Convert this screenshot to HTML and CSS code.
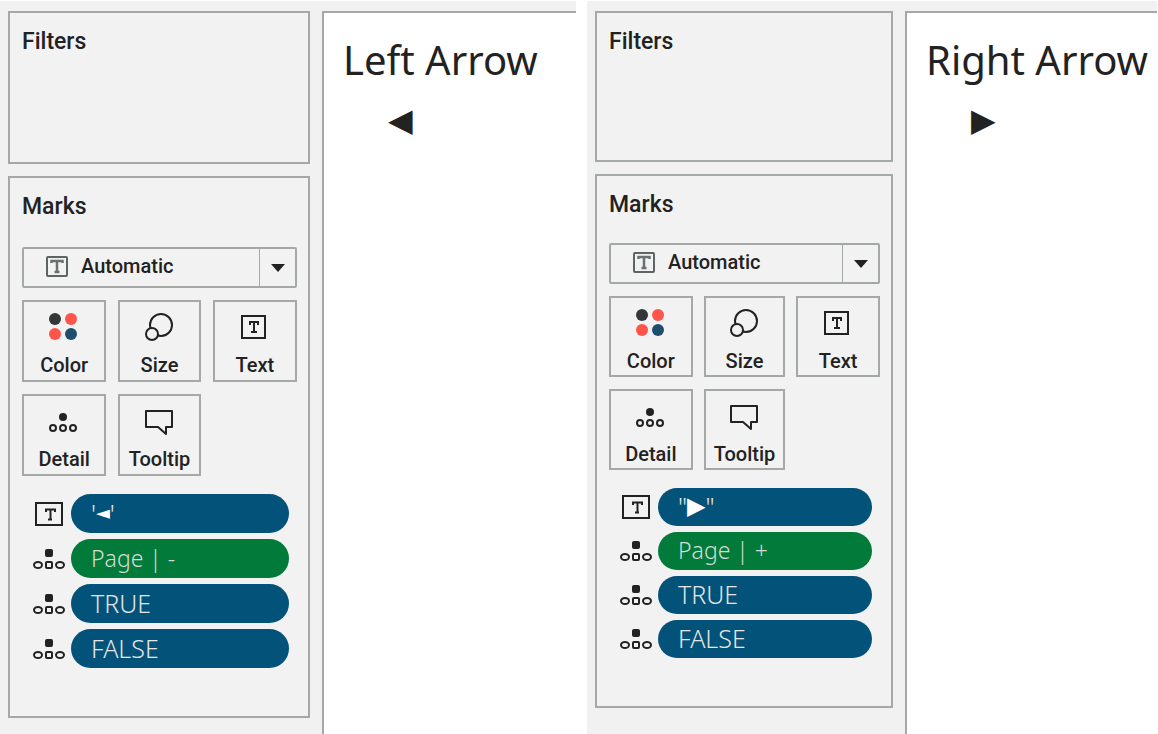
FILE: index.html
```html
<!DOCTYPE html>
<html lang="en">
<head>
<meta charset="utf-8">
<title>Left and right arrow sheets</title>
<link rel="stylesheet" href="styles.css">
</head>
<body>
<svg class="symbols" aria-hidden="true">
  <symbol id="i-color" viewBox="0 0 28 30">
    <circle cx="5" cy="7" r="6" fill="#343737"/><circle cx="21" cy="7" r="6" fill="#ff5449"/>
    <circle cx="5" cy="22" r="6" fill="#ff5449"/><circle cx="21" cy="22" r="6" fill="#1f4e6d"/>
  </symbol>
  <symbol id="i-size" viewBox="0 0 28 30">
    <circle cx="16" cy="13" r="11" fill="none" stroke="#222" stroke-width="2"/>
    <circle cx="7" cy="22" r="6" fill="#f2f2f2" stroke="#222" stroke-width="2"/>
  </symbol>
  <symbol id="i-text" viewBox="0 0 28 30">
    <rect x="1" y="4" width="23" height="22" fill="none" stroke="#222" stroke-width="2"/>
    <path d="M9 13V10h8v3M13 10v10M10 20h6" fill="none" stroke="#222" stroke-width="2"/>
  </symbol>
  <symbol id="i-detail" viewBox="0 0 28 30">
    <circle cx="13" cy="11" r="4" fill="#222"/>
    <g fill="none" stroke="#222" stroke-width="2"><circle cx="3" cy="22" r="3"/><circle cx="13" cy="22" r="3"/><circle cx="23" cy="22" r="3"/></g>
  </symbol>
  <symbol id="i-tooltip" viewBox="0 0 28 30">
    <path d="M1 5h26v16h-6v7l-8-7H1z" fill="none" stroke="#222" stroke-width="2" stroke-linejoin="round"/>
  </symbol>
  <symbol id="i-auto" viewBox="0 0 24 22">
    <rect x="2" y="1" width="20" height="19" rx="1" fill="#f2f2f2" stroke="#5e6363" stroke-width="2"/>
    <path d="M6.500 7V5h11v2M12 5v11M9.500 16h5" fill="none" stroke="#6b7070" stroke-width="2.500"/>
  </symbol>
  <symbol id="i-row-text" viewBox="0 0 32 24">
    <rect x="3" y="1" width="26" height="22" fill="none" stroke="#222" stroke-width="2"/>
    <path d="M13 10V7.500h9V10M17.500 7v10M15 17.500h4" fill="none" stroke="#222" stroke-width="2"/>
  </symbol>
  <symbol id="i-row-detail" viewBox="0 0 32 24">
    <rect x="12" y="2" width="8" height="8" rx="2" fill="#222"/>
    <g fill="none" stroke="#222" stroke-width="2"><ellipse cx="5" cy="18" rx="4" ry="3"/><rect x="13" y="15" width="6" height="6" rx="1"/><ellipse cx="27" cy="18" rx="4" ry="3"/></g>
  </symbol>
</svg>
<main class="sheets">
  <section class="sheet sheet-left">
    <div class="shelves">
      <section class="card filters"><h2 class="card-title">Filters</h2></section>
      <section class="card marks">
        <h2 class="card-title">Marks</h2>
        <div class="mark-type">
          <select class="mark-select" aria-label="Mark type"><option>Automatic</option></select>
          <svg class="mark-icon" aria-hidden="true"><use href="#i-auto"/></svg>
          <span class="mark-drop"><svg class="caret" viewBox="0 0 14 8" aria-hidden="true"><path d="M0 0h14L7 8z" fill="#222"/></svg></span>
        </div>
        <div class="tiles">
          <button class="tile"><svg class="tile-icon" aria-hidden="true"><use href="#i-color"/></svg>Color</button>
          <button class="tile"><svg class="tile-icon" aria-hidden="true"><use href="#i-size"/></svg>Size</button>
          <button class="tile"><svg class="tile-icon" aria-hidden="true"><use href="#i-text"/></svg>Text</button>
          <button class="tile"><svg class="tile-icon" aria-hidden="true"><use href="#i-detail"/></svg>Detail</button>
          <button class="tile"><svg class="tile-icon" aria-hidden="true"><use href="#i-tooltip"/></svg>Tooltip</button>
        </div>
        <ul class="pills">
          <li class="row"><svg class="row-icon" aria-hidden="true"><use href="#i-row-text"/></svg><button class="pill">'<span class="glyph">◄</span>'</button></li>
          <li class="row"><svg class="row-icon" aria-hidden="true"><use href="#i-row-detail"/></svg><button class="pill pill-green">Page | -</button></li>
          <li class="row"><svg class="row-icon" aria-hidden="true"><use href="#i-row-detail"/></svg><button class="pill">TRUE</button></li>
          <li class="row"><svg class="row-icon" aria-hidden="true"><use href="#i-row-detail"/></svg><button class="pill">FALSE</button></li>
        </ul>
      </section>
    </div>
    <div class="canvas">
      <h1 class="canvas-title">Left Arrow</h1>
      <div class="mark">◀</div>
    </div>
  </section>
  <section class="sheet sheet-right">
    <div class="shelves">
      <section class="card filters"><h2 class="card-title">Filters</h2></section>
      <section class="card marks">
        <h2 class="card-title">Marks</h2>
        <div class="mark-type">
          <select class="mark-select" aria-label="Mark type"><option>Automatic</option></select>
          <svg class="mark-icon" aria-hidden="true"><use href="#i-auto"/></svg>
          <span class="mark-drop"><svg class="caret" viewBox="0 0 14 8" aria-hidden="true"><path d="M0 0h14L7 8z" fill="#222"/></svg></span>
        </div>
        <div class="tiles">
          <button class="tile"><svg class="tile-icon" aria-hidden="true"><use href="#i-color"/></svg>Color</button>
          <button class="tile"><svg class="tile-icon" aria-hidden="true"><use href="#i-size"/></svg>Size</button>
          <button class="tile"><svg class="tile-icon" aria-hidden="true"><use href="#i-text"/></svg>Text</button>
          <button class="tile"><svg class="tile-icon" aria-hidden="true"><use href="#i-detail"/></svg>Detail</button>
          <button class="tile"><svg class="tile-icon" aria-hidden="true"><use href="#i-tooltip"/></svg>Tooltip</button>
        </div>
        <ul class="pills">
          <li class="row"><svg class="row-icon" aria-hidden="true"><use href="#i-row-text"/></svg><button class="pill">"<span class="glyph glyph-large">▶</span>"</button></li>
          <li class="row"><svg class="row-icon" aria-hidden="true"><use href="#i-row-detail"/></svg><button class="pill pill-green">Page | +</button></li>
          <li class="row"><svg class="row-icon" aria-hidden="true"><use href="#i-row-detail"/></svg><button class="pill">TRUE</button></li>
          <li class="row"><svg class="row-icon" aria-hidden="true"><use href="#i-row-detail"/></svg><button class="pill">FALSE</button></li>
        </ul>
      </section>
    </div>
    <div class="canvas">
      <h1 class="canvas-title">Right Arrow</h1>
      <div class="mark">▶</div>
    </div>
  </section>
</main>
</body>
</html>
```
FILE: styles.css
```css
* { box-sizing: border-box; }
body { margin: 0; background: #fff; color: #222; font-family: Roboto, sans-serif; }
.symbols { position: absolute; width: 0; height: 0; }
.sheets { display: grid; grid-template-columns: 576fr 570fr; column-gap: 11px; min-height: 100vh; padding: 1px 1px 0 0; }
.sheet { display: grid; column-gap: 12px; padding: 10px 0 0 8px; background: #f1f1f1; }
.sheet-left { grid-template-columns: 302px 1fr; --filters: 153px; --title-gap: 24px; --tile: 82px; --pill: 39px; --col-gap: 12px; }
.sheet-right { grid-template-columns: 298px 1fr; --filters: 151px; --title-gap: 22px; --tile: 81px; --pill: 38px; --col-gap: 11px; }
.shelves { display: flex; flex-direction: column; gap: 12px; padding-bottom: 16px; }
.card { border: 2px solid #a4a9a8; background: #f2f2f2; padding: 13px 11px 12px 12px; }
.filters { min-height: var(--filters); }
.marks { padding-bottom: 48px; }
.card-title { margin: 0; font-size: 23px; line-height: 32px; font-weight: 500; }
.mark-type { position: relative; margin-top: var(--title-gap); }
.mark-select { display: block; width: 100%; height: 41px; padding: 0 40px 3px 57px; border: 2px solid #a4a9a8; border-radius: 2px; background: #f2f2f2; color: #222; font: 500 20px/24px Roboto, sans-serif; appearance: none; }
.mark-icon { position: absolute; left: 23px; top: 9px; width: 24px; height: 22px; pointer-events: none; }
.mark-drop { position: absolute; right: 2px; top: 2px; bottom: 2px; width: 36px; border-left: 1px solid #a4a9a8; display: flex; align-items: center; justify-content: center; pointer-events: none; }
.caret { width: 14px; height: 8px; }
.tiles { display: grid; grid-template-columns: 84fr 82fr 84fr; gap: 12px var(--col-gap); margin-top: 12px; }
.tile { display: flex; flex-direction: column; align-items: center; gap: 11px; height: var(--tile); padding: 10px 0 0; border: 2px solid #a4a9a8; background: #f2f2f2; color: #222; font: 500 20px/24px Roboto, sans-serif; }
.tile-icon { width: 28px; height: 30px; flex: none; overflow: visible; }
.tile-icon, .symbols symbol { overflow: visible; }
.pills { list-style: none; margin: 18px 0 0; padding: 0 8px 0 11px; display: grid; gap: 6px; }
.row { display: flex; align-items: center; gap: 6px; }
.row-icon { width: 32px; height: 24px; flex: none; }
.pill { flex: 1; display: flex; align-items: center; height: var(--pill); padding: 0 20px 2px; border: 0; border-radius: 20px; background: #02527a; color: #e4e6e6; font: 300 25px/32px "Noto Sans", sans-serif; text-align: left; white-space: pre; }
.pill-green { background: #027a3a; color: #d4dcd7; font-size: 23px; }
.glyph { font: 18px/24px "DejaVu Sans", sans-serif; color: #fff; }
.glyph-large { font-size: 24px; }
.canvas { border: solid #a4a9a8; border-width: 2px 0 0 2px; background: #fff; padding: 19px 0 0 19px; }
.canvas-title { margin: 0; font: 400 40px/56px "Noto Sans", sans-serif; white-space: nowrap; }
.mark { padding: 12px 0 0 45px; font: 32px/40px "DejaVu Sans", sans-serif; }
```
